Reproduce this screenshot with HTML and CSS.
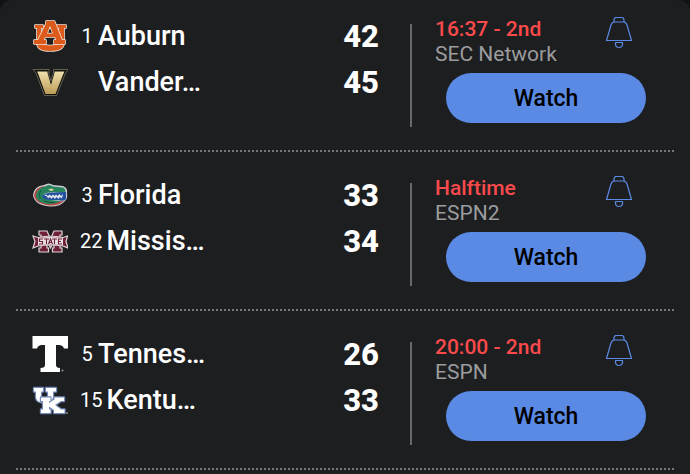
FILE: index.html
```html
<!DOCTYPE html>
<html lang="en">
<head>
<meta charset="utf-8">
<meta name="viewport" content="width=device-width, initial-scale=1">
<title>Scores</title>
<link rel="stylesheet" href="styles.css">
</head>
<body>
<svg class="defs" aria-hidden="true">
  <symbol id="bell" viewBox="0 0 28 34">
    <g fill="none" stroke="#5b8ae4" stroke-width="1.2" stroke-linejoin="round">
      <path d="M9 5V3Q9 .5 11.500 .5H16.500Q19 .5 19 3V5"/>
      <path d="M1.500 23.500L6 8Q7 5 9.500 5H18.500Q21 5 22 8L26.500 23.500Z"/>
      <path d="M10.500 25.500H17.500V27Q17.500 30.500 14 30.500Q10.500 30.500 10.500 27Z"/>
    </g>
  </symbol>
</svg>
<main class="scoreboard">
  <article class="game">
    <div class="teams">
      <div class="team">
        <svg class="logo" viewBox="0 0 36 36" role="img" aria-label="Auburn logo">
          <g fill="#dc5a1c" stroke="#f6e4d8" stroke-width="1.600" stroke-linejoin="round" paint-order="stroke">
            <path d="M3 7H11V10H9V24Q11 27.500 18 27.500Q25 27.500 27 24V10H25V7H34V10H32V24Q33 33 18 33Q4 33 5 24V10H3Z"/>
            <path fill-rule="evenodd" d="M14 3H22.500L30 22H33V26H22V22H24L23 19H13L12 22H14V26H2V22H6L14 5.500ZM18 8L15 15.500H21Z"/>
          </g>
          <path d="M15 20.500H21V26H15Z" fill="#1d1e20"/>
        </svg>
        <span class="rank">1</span><span class="name">Auburn</span><span class="score">42</span>
      </div>
      <div class="team">
        <svg class="logo" viewBox="0 0 36 36" role="img" aria-label="Vanderbilt logo">
          <defs><linearGradient id="gold" x1="0" x2="0" y1="0" y2="1"><stop offset="0" stop-color="#efe0ac"/><stop offset="1" stop-color="#bd9c58"/></linearGradient></defs>
          <path d="M1 5.500H17V9H16.500L19 17L21.500 9V5.500H36L33.500 9L24.500 31.500H12.500L4 9Z" fill="#111210" stroke="#77745f" stroke-width=".8"/>
          <path d="M5 7.500H15.500V9L19 21L22.500 9V7.500H32.500L31.500 9.500L23.500 30H13.500L6 9.500Z" fill="url(#gold)"/>
        </svg>
        <span class="rank"></span><span class="name">Vander…</span><span class="score">45</span>
      </div>
    </div>
    <div class="info">
      <div class="status">
        <div class="labels"><p class="clock">16:37 - 2nd</p><p class="network">SEC Network</p></div>
        <button class="alert" type="button" aria-label="Game alerts"><svg class="bell"><use href="#bell"/></svg></button>
      </div>
      <button class="watch" type="button">Watch</button>
    </div>
  </article>
  <article class="game">
    <div class="teams">
      <div class="team">
        <svg class="logo" viewBox="0 0 36 36" role="img" aria-label="Florida logo">
          <path d="M1 18Q2 9 12 8Q17 5 21 8L31 9Q36 11 35 16Q36 21 33 24Q29 29.500 18 29.500Q2 28 1 18Z" fill="#c9ccd6"/>
          <path d="M2 18Q3 10 13 9Q7 13 7 19Q9 27 32 24Q27 28.500 18 28.500Q3 27 2 18Z" fill="#b9463d"/>
          <path d="M4 18Q5 11 13 9.500Q17 6.500 21 9.500L31 10.500Q34.500 12 33 16L22 15Q14 15 11 18Q12 22 18 23L29 24Q24 27 17 27Q4 26 4 18Z" fill="#28835d"/>
          <path d="M10 19Q14 15 22 15.500L34 15V22Q32 25 26 23H18Q11 23 10 19Z" fill="#22509d"/>
          <path d="M12 18L14 17.500L16 19L17.500 17.500L19.500 19L21 17.500L22.500 19L24 17.500L25.500 19L27.500 17L29 19L31 17L30.500 19.500L29.500 21.500L28 20L26.500 22L24.500 20L23 22L21 20L19.500 22L18 20L16 21.500L15 19.500Z" fill="#dfe3e6"/>
          <path d="M16 12.500L20 11.500L22 13L19 14Z" fill="#e0d5a0"/>
          <path d="M9 13Q6 17 8 21M12 24Q17 26 23 25.500" fill="none" stroke="#145440"/>
        </svg>
        <span class="rank">3</span><span class="name">Florida</span><span class="score">33</span>
      </div>
      <div class="team">
        <svg class="logo" viewBox="0 0 36 36" role="img" aria-label="Mississippi State logo">
          <path d="M7 8H15L18.500 16L22 8H30V12H28V25H30V29H20.500V25H22V18L18.500 25L15 18V25H16.500V29H7V25H9V12H7Z" fill="#6e2036" stroke="#e2d5d9" stroke-width="1.200"/>
          <path d="M1 13L6 14.500Q18.500 12 31 14.500L35.500 13L34 18.500L36 25L31 23Q18.500 21 6 23L1 25L3 18.500Z" fill="#6e2036" stroke="#e2d5d9" stroke-width="1.200"/>
          <path d="M6 15Q18.500 13 31 15V22.500Q18.500 20.500 6 22.500Z" fill="#e9dfe3"/>
          <path d="M11 16H7.500V18.500H10.500V21H7M12 16H17M14.500 16V21M16.500 21L18.500 16L20.500 21M17.500 19.500H19.500M20 16H25M22.500 16V21M30 16H26.500V21H30M26.500 18.500H29" fill="none" stroke="#6e2036" stroke-width="1.100"/>
        </svg>
        <span class="rank">22</span><span class="name">Missis…</span><span class="score">34</span>
      </div>
    </div>
    <div class="info">
      <div class="status">
        <div class="labels"><p class="clock">Halftime</p><p class="network">ESPN2</p></div>
        <button class="alert" type="button" aria-label="Game alerts"><svg class="bell"><use href="#bell"/></svg></button>
      </div>
      <button class="watch" type="button">Watch</button>
    </div>
  </article>
  <article class="game">
    <div class="teams">
      <div class="team">
        <svg class="logo" viewBox="0 0 36 36" role="img" aria-label="Tennessee logo">
          <path d="M.5 0H36V12.500H32Q31 9 27 9H24V29Q24 32 28 32V36H8.500V32Q13 32 13 29V9H10Q6 9 5 12.500H.5Z" fill="#fff"/>
          <circle cx="30.500" cy="34.500" r="1" fill="#999"/>
        </svg>
        <span class="rank">5</span><span class="name">Tennes…</span><span class="score">26</span>
      </div>
      <div class="team">
        <svg class="logo" viewBox="0 0 36 36" role="img" aria-label="Kentucky logo">
          <g fill="#fff" stroke="#7488b8" stroke-width="2.400" stroke-linejoin="round" paint-order="stroke">
            <path d="M2 6H11V9.500H9V14Q9 16.500 12.500 16.500Q16 16.500 16 14V9.500H14V6H24V9.500H21V15Q21 20.500 12.500 20.500Q4 20.500 4 15V9.500H2Z"/>
            <path d="M9 15.500H18.500V19H17V21L22.500 17.500V15.500H32V19H29L23 23L29 27.500H32.500V31H22V28L17 24.500V27.500H18.500V31H9V27.500H11V19H9Z"/>
          </g>
          <circle cx="35" cy="31" r="1" fill="#888"/>
        </svg>
        <span class="rank">15</span><span class="name">Kentu…</span><span class="score">33</span>
      </div>
    </div>
    <div class="info">
      <div class="status">
        <div class="labels"><p class="clock">20:00 - 2nd</p><p class="network">ESPN</p></div>
        <button class="alert" type="button" aria-label="Game alerts"><svg class="bell"><use href="#bell"/></svg></button>
      </div>
      <button class="watch" type="button">Watch</button>
    </div>
  </article>
</main>
</body>
</html>
```
FILE: styles.css
```css
* { box-sizing: border-box; }
html { background: #111214; }
body {
  margin: 0;
  font-family: Roboto, "Liberation Sans", sans-serif;
  color: #fff;
}
p { margin: 0; }
button { font: inherit; border: 0; padding: 0; cursor: pointer; }
.defs { display: none; }
.scoreboard {
  min-height: 100vh;
  padding: 0 16px;
  background: #1d1e20;
  border-radius: 12px 12px 0 0;
}
.game {
  display: grid;
  grid-template-columns: minmax(0, 1fr) 262px;
  padding: 24px 0 23px;
  border-bottom: 2px dotted #77787a;
}
.game:first-child { padding-top: 17px; }
.teams {
  display: flex;
  flex-direction: column;
  gap: 22px;
  margin-top: 7px;
  padding: 0 31px 0 16px;
  border-right: 2px solid #68696b;
}
.team {
  display: flex;
  align-items: center;
  height: 24px;
}
.logo { flex: none; width: 36px; height: 36px; margin-right: 12px; }
.rank { min-width: 14px; margin-right: 4px; font-size: 20px; text-align: center; }
.name { font-size: 27px; font-weight: 500; }
.score { margin-left: auto; font-size: 31px; font-weight: 800; }
.info { padding: 0 28px 4px 23px; }
.status { display: flex; justify-content: space-between; margin-bottom: 6px; }
.clock, .network { font-size: 21px; line-height: 25px; }
.clock { color: #fb4a4c; font-weight: 500; }
.network { color: #9b9c9e; }
.alert { height: 34px; margin-right: 13px; background: none; }
.bell { display: block; width: 28px; height: 34px; }
.watch {
  display: block;
  width: calc(100% - 11px);
  height: 50px;
  margin-left: 11px;
  border-radius: 25px;
  background: #5a8ae4;
  color: #000;
  font-size: 23px;
  font-weight: 500;
}
```
